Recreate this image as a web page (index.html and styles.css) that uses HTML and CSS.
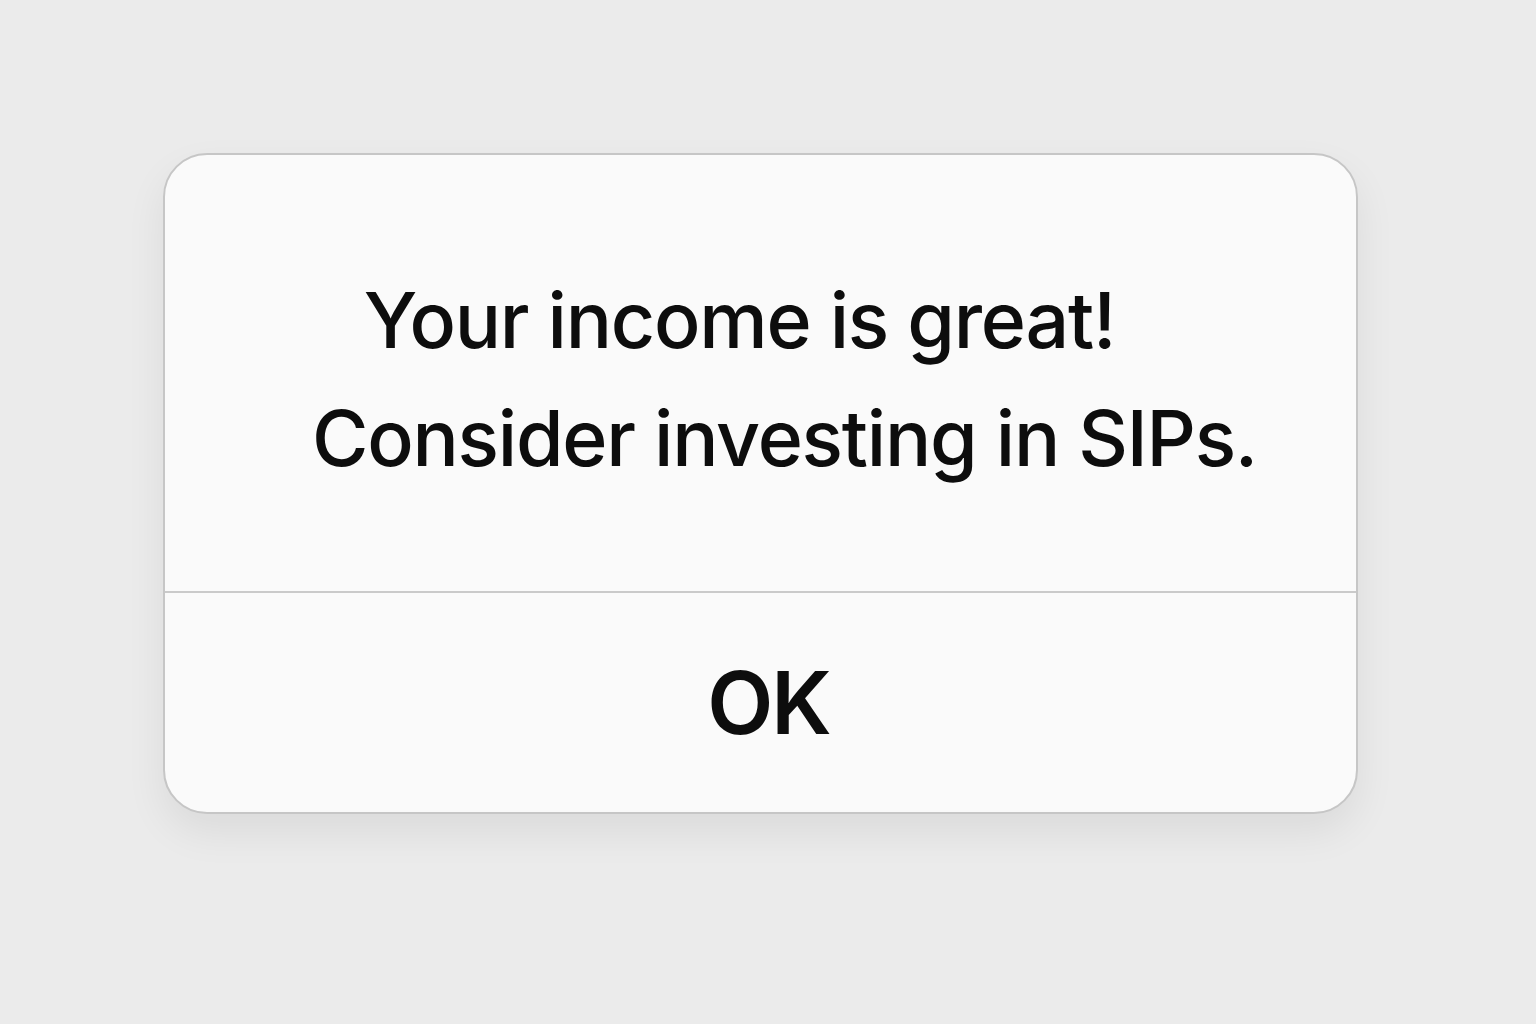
FILE: index.html
```html
<!DOCTYPE html>
<html lang="en">
<head>
<meta charset="utf-8">
<title>Alert</title>
<link rel="stylesheet" href="styles.css">
</head>
<body>
<div class="page">
  <div class="dialog" role="alertdialog">
    <div class="message">
      <p class="line line-1">Your income is great!</p>
      <p class="line line-2">Consider investing in SIPs.</p>
    </div>
    <div class="actions">
      <button class="ok-btn" type="button">OK</button>
    </div>
  </div>
</div>
</body>
</html>
```
FILE: styles.css
```css
html, body {
  margin: 0;
  padding: 0;
  background: #ebebeb;
}
body {
  width: 1536px;
  height: 1024px;
  overflow: hidden;
  font-family: "Inter", "Liberation Sans", sans-serif;
}
.page {
  padding: 153px 0 0 163px;
}
.dialog {
  width: 1191px;
  height: 657px;
  background: #fafafa;
  border: 2px solid #c6c6c6;
  border-radius: 44px;
  box-shadow: 0 18px 40px rgba(0, 0, 0, 0.07);
  display: flex;
  flex-direction: column;
  overflow: hidden;
}
.message {
  height: 438px;
  border-bottom: 2px solid #cacaca;
  display: flex;
  flex-direction: column;
  align-items: center;
  padding-top: 106px;
  box-sizing: border-box;
}
.line {
  margin: 0;
  font-size: 77px;
  font-weight: 450;
  color: #0d0d0d;
  line-height: 118px;
  letter-spacing: -1.25px;
}
.line-1 {
  margin-right: 42px;
}
.line-2 {
  margin-left: 48px;
}
.actions {
  flex: 1;
  display: flex;
  justify-content: center;
  align-items: flex-start;
  padding-top: 58px;
}
.ok-btn {
  background: none;
  border: none;
  padding: 0;
  margin-left: 16px;
  font-family: "Inter", "Liberation Sans", sans-serif;
  font-size: 86px;
  font-weight: 600;
  letter-spacing: -2px;
  color: #0d0d0d;
  line-height: 104px;
  cursor: pointer;
}
```
